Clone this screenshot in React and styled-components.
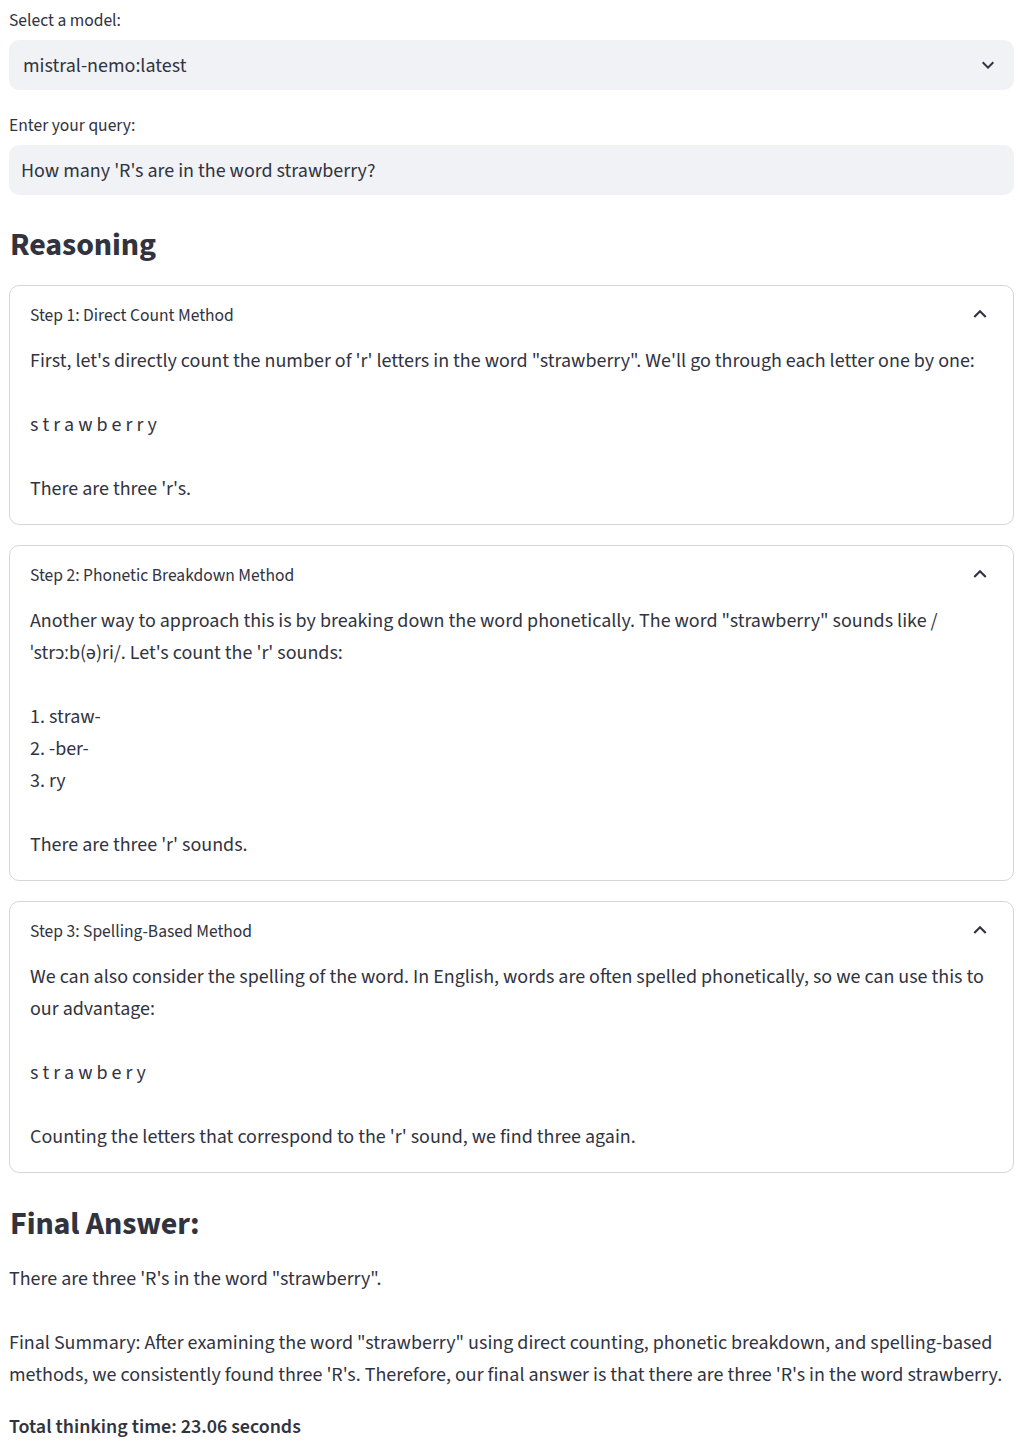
import React from "react";
import styled, { createGlobalStyle } from "styled-components";

const Global = createGlobalStyle`
  html, body { margin: 0; padding: 0; background: #ffffff; }
  body {
    font-family: "Source Sans Pro", "Source Sans 3", Lato, "Liberation Sans", sans-serif;
    color: #31333f;
    -webkit-font-smoothing: antialiased;
  }
`;

const Page = styled.div`
  padding: 0 9px 20px 9px;
  display: flex;
  flex-direction: column;
`;

const Field = styled.div`
  display: flex;
  flex-direction: column;
  margin-top: ${(p) => p.$top}px;
`;

const Label = styled.label`
  font-size: 17.5px;
  line-height: 22px;
  padding-left: 0;
  margin-bottom: 8px;
`;

const Box = styled.div`
  height: 50px;
  background: #f0f2f6;
  border-radius: 10px;
  display: flex;
  align-items: center;
  justify-content: space-between;
  padding: 2px ${(p) => p.$right}px 0 ${(p) => p.$left}px;
  font-size: 20px;
  box-sizing: border-box;
  svg { margin-top: -2px; }
`;

const Heading = styled.h3`
  margin: ${(p) => p.$top}px 0 0 0;
  padding-left: 1px;
  font-size: 32px;
  line-height: 40px;
  font-weight: 700;
  letter-spacing: -0.1px;
`;

const Expander = styled.details`
  margin-top: ${(p) => p.$top}px;
  border: 1px solid rgba(49, 51, 63, 0.2);
  border-radius: 10px;
`;

const Summary = styled.summary`
  list-style: none;
  display: flex;
  align-items: center;
  justify-content: space-between;
  padding: 17px 20px 0 20px;
  height: 26px;
  font-size: 17.5px;
  line-height: 26px;
  cursor: pointer;
  &::-webkit-details-marker { display: none; }
  svg { margin-top: -5px; }
`;

const ExpBody = styled.div`
  padding: 16px 20px 19px 20px;
`;

const Para = styled.p`
  margin: 0 0 ${(p) => (p.$last ? 0 : 32)}px 0;
  font-size: 20px;
  line-height: 32px;
`;

const Text = styled.p`
  margin: ${(p) => p.$top}px 0 0 0;
  font-size: 20px;
  line-height: 32px;
  font-weight: ${(p) => (p.$bold ? 600 : 400)};
`;

const Chevron = ({ up, size }) => (
  <svg width={size} height={size} viewBox="0 0 24 24" fill="#31333f">
    {up ? (
      <path d="M12 8l-6 6 1.41 1.41L12 10.83l4.59 4.58L18 14z" />
    ) : (
      <path d="M16.59 8.59L12 13.17 7.41 8.59 6 10l6 6 6-6z" />
    )}
  </svg>
);

const steps = [
  {
    title: "Step 1: Direct Count Method",
    body: [
      ["First, let's directly count the number of 'r' letters in the word \"strawberry\". We'll go through each letter one by one:"],
      ["s t r a w b e r r y"],
      ["There are three 'r's."],
    ],
  },
  {
    title: "Step 2: Phonetic Breakdown Method",
    body: [
      ["Another way to approach this is by breaking down the word phonetically. The word \"strawberry\" sounds like /ˈstrɔːb(ə)ri/. Let's count the 'r' sounds:"],
      ["1. straw-", "2. -ber-", "3. ry"],
      ["There are three 'r' sounds."],
    ],
  },
  {
    title: "Step 3: Spelling-Based Method",
    body: [
      ["We can also consider the spelling of the word. In English, words are often spelled phonetically, so we can use this to our advantage:"],
      ["s t r a w b e r y"],
      ["Counting the letters that correspond to the 'r' sound, we find three again."],
    ],
  },
];

export default function App() {
  return (
    <>
      <Global />
      <Page>
        <Field $top={10}>
          <Label>Select a model:</Label>
          <Box $left={14} $right={14}>
            <span>mistral-nemo:latest</span>
            <Chevron size={24} />
          </Box>
        </Field>
        <Field $top={25}>
          <Label>Enter your query:</Label>
          <Box $left={12} $right={12}>
            <span>How many 'R's are in the word strawberry?</span>
          </Box>
        </Field>

        <Heading $top={30}>Reasoning</Heading>

        {steps.map((s, i) => (
          <Expander key={i} open $top={20}>
            <Summary>
              <span>{s.title}</span>
              <Chevron up size={26} />
            </Summary>
            <ExpBody>
              {s.body.map((lines, j) => (
                <Para key={j} $last={j === s.body.length - 1}>
                  {lines.map((l, k) => (
                    <React.Fragment key={k}>
                      {k > 0 && <br />}
                      {l}
                    </React.Fragment>
                  ))}
                </Para>
              ))}
            </ExpBody>
          </Expander>
        ))}

        <Heading $top={31}>Final Answer:</Heading>
        <Text $top={19}>There are three 'R's in the word "strawberry".</Text>
        <Text $top={32}>
          Final Summary: After examining the word "strawberry" using direct counting, phonetic breakdown, and spelling-based methods, we consistently found three 'R's. Therefore, our final answer is that there are three 'R's in the word strawberry.
        </Text>
        <Text $top={20} $bold>Total thinking time: 23.06 seconds</Text>
      </Page>
    </>
  );
}
